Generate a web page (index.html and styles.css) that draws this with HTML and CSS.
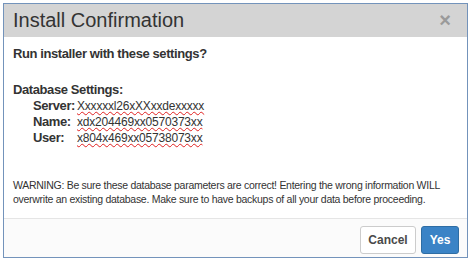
FILE: index.html
```html
<!DOCTYPE html>
<html lang="en">
<head>
    <meta charset="UTF-8">
    <title>Install Confirmation</title>
    <link rel="stylesheet" href="styles.css">
</head>
<body>
<div class="dialog">
    <div class="dialog_header">
        <div class="dialog_title">Install Confirmation</div>
        <div class="dialog_close">&times;</div>
    </div>
    <div class="dialog_body">
        <p class="question">Run installer with these settings?</p>
        <p class="section_title">Database Settings:</p>
        <div class="settings">
            <span class="label">Server:</span><span class="value">Xxxxxxl26xXXxxdexxxxx</span>
            <span class="label">Name:</span><span class="value">xdx204469xx0570373xx</span>
            <span class="label">User:</span><span class="value">x804x469xx05738073xx</span>
        </div>
        <p class="warning">WARNING: Be sure these database parameters are correct! Entering the wrong information WILL overwrite an existing database. Make sure to have backups of all your data before proceeding.</p>
    </div>
    <div class="dialog_footer">
        <button class="btn btn_default">Cancel</button>
        <button class="btn btn_primary">Yes</button>
    </div>
</div>
</body>
</html>
```

FILE: styles.css
```css
body {
    margin: 0;
    padding: 3px 4px 0 3px;
    background-color: #ffffff;
    font-family: "Liberation Sans", Arial, sans-serif;
    color: #333333;
}

.dialog {
    width: 463px;
    border: 1px solid #7393bb;
    background-color: #ffffff;
}

.dialog_header {
    display: flex;
    justify-content: space-between;
    align-items: center;
    height: 33px;
    padding: 0 16px 0 9px;
    background-color: #d4d4d4;
}

.dialog_title {
    font-size: 20px;
    color: #333333;
}

.dialog_close {
    font-size: 20px;
    font-weight: bold;
    color: #9a9a9a;
}

.dialog_body {
    padding: 9px 9px 12px 9px;
    font-size: 13px;
}

.dialog_body p {
    margin: 0;
}

.question {
    font-weight: bold;
    letter-spacing: -0.4px;
    line-height: 16px;
    margin-bottom: 20px !important;
}

.section_title {
    font-weight: bold;
    letter-spacing: -0.4px;
    line-height: 16px;
}

.settings {
    display: grid;
    grid-template-columns: 44px auto;
    justify-content: start;
    padding-left: 20px;
    font-weight: bold;
    line-height: 16px;
}

.label {
    letter-spacing: -0.4px;
}

.value {
    font-weight: normal;
    font-size: 12px;
    letter-spacing: -0.2px;
    text-decoration: underline wavy #e02020;
    text-decoration-thickness: 1px;
}

.warning {
    margin-top: 32px !important;
    font-size: 10.5px;
    letter-spacing: -0.28px;
    line-height: 14px;
}

.dialog_footer {
    display: flex;
    justify-content: flex-end;
    gap: 5px;
    padding: 7px 8px 3px 0;
    border-top: 1px solid #e5e5e5;
    background-color: #fbfbfb;
}

.btn {
    height: 28px;
    padding: 0;
    font-family: "Liberation Sans", Arial, sans-serif;
    font-size: 12px;
    font-weight: bold;
    border-radius: 3px;
    border: 1px solid #cccccc;
}

.btn_default {
    width: 56px;
    background-color: #ffffff;
    color: #4a4a4a;
}

.btn_primary {
    width: 38px;
    background-color: #3a83c6;
    border-color: #2e6da4;
    color: #ffffff;
}
```
